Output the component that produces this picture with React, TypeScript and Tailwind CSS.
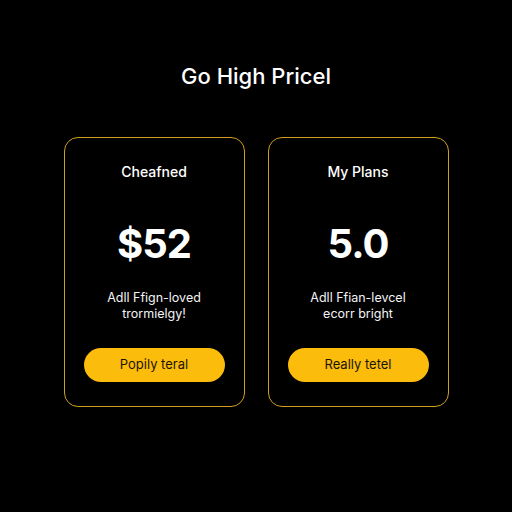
import React from "react";

const plans = [
  { name: "Cheafned", price: "$52", lines: ["Adll Ffign-loved", "trormielgy!"], cta: "Popily teral" },
  { name: "My Plans", price: "5.0", lines: ["Adll Ffian-levcel", "ecorr bright"], cta: "Really tetel" },
];

const PlanCard = ({ plan }: { plan: (typeof plans)[number] }) => {
  return (
    <div className="w-[181px] h-[270px] rounded-[14px] border border-[#d09f1d] bg-black flex flex-col items-center pt-6 px-[19px]">
      <h3 className="text-[14px] leading-5 font-medium text-white">{plan.name}</h3>
      <div className="mt-10 text-[40px] leading-[44px] font-bold text-white tracking-tight">
        {plan.price}
      </div>
      <div className="mt-6 flex flex-col items-center text-[12.5px] leading-4 text-gray-100">
        {plan.lines.map((l) => (
          <span key={l}>{l}</span>
        ))}
      </div>
      <button className="mt-[26px] w-full h-[34px] rounded-full bg-[#fbbc0c] text-[13px] text-[#1a1405]">
        {plan.cta}
      </button>
    </div>
  );
};

export default function App() {
  return (
    <div
      className="w-[512px] h-[512px] bg-black flex flex-col items-center pt-[61px]"
      style={{ fontFamily: "Inter, 'Open Sans', sans-serif" }}
    >
      <h1 className="text-[22px] leading-[30px] font-medium text-white">Go High Pricel</h1>
      <div className="mt-[46px] flex gap-[23px]">
        {plans.map((p) => (
          <PlanCard key={p.name} plan={p} />
        ))}
      </div>
    </div>
  );
}
